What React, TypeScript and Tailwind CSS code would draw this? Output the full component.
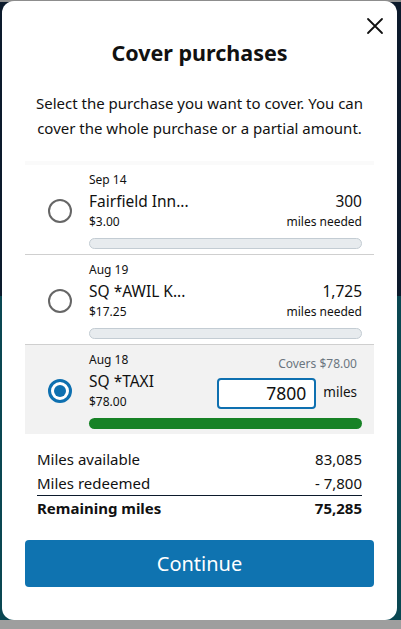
import React from "react";

type Purchase = {
  date: string;
  name: string;
  price: string;
  miles?: string;
  selected?: boolean;
};

const purchases: Purchase[] = [
  { date: "Sep 14", name: "Fairfield Inn...", price: "$3.00", miles: "300" },
  { date: "Aug 19", name: "SQ *AWIL K...", price: "$17.25", miles: "1,725" },
  { date: "Aug 18", name: "SQ *TAXI", price: "$78.00", selected: true },
];

function Radio({ checked }: { checked?: boolean }) {
  if (checked) {
    return (
      <div className="w-[24px] h-[24px] rounded-full border-[3px] border-[#0e70b0] flex items-center justify-center bg-white">
        <div className="w-[12px] h-[12px] rounded-full bg-[#0e70b0]" />
      </div>
    );
  }
  return <div className="w-[24px] h-[24px] rounded-full border-2 border-[#666] bg-white" />;
}

function Row({ p }: { p: Purchase }) {
  return (
    <div
      className={`flex items-start pl-[23px] pr-[12px] pt-[7px] pb-[5px] ${
        p.selected ? "bg-[#f2f2f2]" : "border-b border-[#cfcfcf]"
      }`}
    >
      <div className="w-[24px] mt-[27px] mr-[17px] shrink-0">
        <Radio checked={p.selected} />
      </div>
      <div className="flex-1 flex flex-col">
        <div className="flex justify-between">
          <div className="flex flex-col text-[#111]">
            <span className="text-[12px] leading-[16px]">{p.date}</span>
            <span className="text-[15.5px] leading-[26px]">{p.name}</span>
            <span className="text-[12px] leading-[16px]">{p.price}</span>
          </div>
          {p.selected ? (
            <div className="flex flex-col items-end mr-[5px]">
              <span className="text-[12px] leading-[16px] mt-[4px] text-[#6b7680]">Covers $78.00</span>
              <div className="flex items-center mt-[6px]">
                <div className="w-[99px] h-[31px] rounded-[4px] border-2 border-[#0e70b0] bg-white flex items-center justify-end pr-[8px] text-[17.5px] text-[#111]">
                  7800
                </div>
                <span className="ml-[7px] text-[13.5px] text-[#111] -mt-[2px]">miles</span>
              </div>
            </div>
          ) : (
            <div className="flex flex-col items-end text-[#111]">
              <span className="text-[15.5px] leading-[26px] mt-[16px]">{p.miles}</span>
              <span className="text-[12px] leading-[16px]">miles needed</span>
            </div>
          )}
        </div>
        <div
          className={`mt-[8px] h-[11px] rounded-full ${
            p.selected ? "bg-[#178226]" : "bg-[#e7ebee] border border-[#c3ccd3]"
          }`}
        />
      </div>
    </div>
  );
}

export default function App() {
  return (
    <div
      className="w-[401px] h-[629px] pt-[1px] pl-[2px] pr-[4px] bg-[linear-gradient(to_bottom,#8d8d8d_0px,#8d8d8d_2px,#0c1a2c_2px,#0c1a2c_296px,#0a4752_296px,#0a4752_620px,#9e9e9e_620px)]"
      style={{ fontFamily: '"Noto Sans", "Open Sans", sans-serif' }}
    >
      <div className="relative h-[619px] rounded-[12px] bg-white px-[23px]">
        <button className="absolute top-[16px] right-[13px] w-[18px] h-[18px]" aria-label="Close">
          <svg viewBox="0 0 18 18" className="w-[18px] h-[18px]">
            <path d="M2 2 L16 16 M16 2 L2 16" stroke="#111" strokeWidth="1.8" strokeLinecap="round" />
          </svg>
        </button>

        <h1 className="pt-[37px] text-center text-[21.5px] leading-[30px] font-bold text-[#111]">
          Cover purchases
        </h1>
        <p className="mt-[23px] text-center text-[15px] leading-[25px] text-[#111]">
          Select the purchase you want to cover. You can
          <br />
          cover the whole purchase or a partial amount.
        </p>

        <div className="mt-[20px]">
          <div className="h-[4px] bg-[#fafafa]" />
          {purchases.map((p) => (
            <Row key={p.date} p={p} />
          ))}
        </div>

        <div className="mt-[13px] px-[12px] text-[15px] leading-[24px] text-[#111]">
          <div className="flex justify-between">
            <span>Miles available</span>
            <span>83,085</span>
          </div>
          <div className="flex justify-between border-b border-[#0c1a2c]">
            <span>Miles redeemed</span>
            <span>- 7,800</span>
          </div>
          <div className="flex justify-between font-bold">
            <span>Remaining miles</span>
            <span>75,285</span>
          </div>
        </div>

        <button className="mt-[20px] w-full h-[47px] rounded-[4px] bg-[#0f73b0] text-white text-[20px]">
          Continue
        </button>
      </div>
    </div>
  );
}
